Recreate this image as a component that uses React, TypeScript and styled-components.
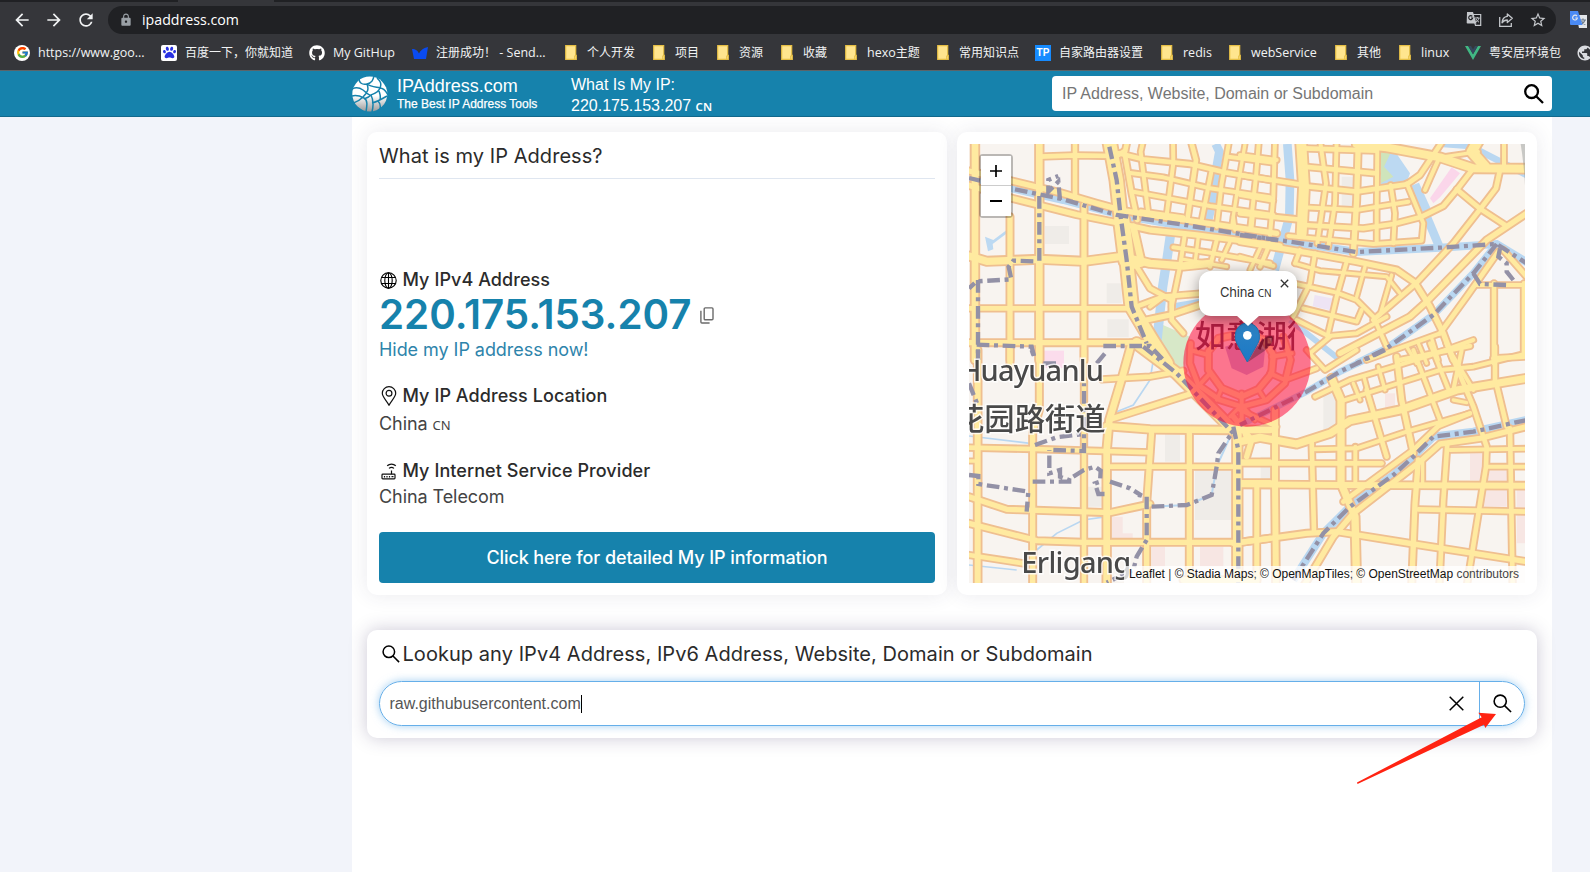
import React from 'react';
import styled, { createGlobalStyle } from 'styled-components';
import { MdArrowBack, MdArrowForward, MdRefresh, MdLock, MdStarBorder, MdPublic } from 'react-icons/md';
import { FcGoogle } from 'react-icons/fc';
import { FaGithub, FaPaw } from 'react-icons/fa';

const ARIAL = '"Liberation Sans", Arial, "Noto Sans CJK SC", sans-serif';
const INTER = 'Inter, "Noto Sans CJK SC", sans-serif';
const SEGOE = '"Open Sans", "Noto Sans CJK SC", sans-serif';

const GlobalStyle = createGlobalStyle`
  * { box-sizing: border-box; }
  html, body { margin: 0; height: 100%; overflow: hidden; }
  body { background: #f2f4fa; font-family: ${INTER}; color: #2b2b2b; }
`;

const Page = styled.div`
  width: 1590px;
  height: 872px;
  display: flex;
  flex-direction: column;
  overflow: hidden;
  position: relative;
`;

/* ---------- browser chrome ---------- */

const TabStrip = styled.div`
  height: 2px;
  flex: none;
  background: #202124;
  padding-left: 178px;
`;
const ActiveTab = styled.div`
  width: 96px;
  height: 2px;
  background: #35363a;
`;
const Toolbar = styled.div`
  height: 36px;
  flex: none;
  background: #35363a;
  display: flex;
  align-items: center;
  padding-left: 12px;
  overflow: hidden;
`;
const NavButtons = styled.div`
  display: flex;
  flex: none;
  gap: 12px;
  color: #f1f3f4;
  width: 96px;
  svg { display: block; flex: none; }
`;
const Omnibox = styled.div`
  width: 1448px;
  flex: none;
  height: 28px;
  border-radius: 14px;
  background: #202124;
  display: flex;
  align-items: center;
  padding: 0 9px 0 11px;
  font-family: ${SEGOE};
  font-size: 14.2px;
  color: #fff;
`;
const LockSlot = styled.div`
  width: 23px;
  color: #9aa0a6;
  svg { display: block; }
`;
const Url = styled.span`
  flex: 1;
  line-height: 20px;
`;
const OmniActions = styled.div`
  display: flex;
  gap: 14.500px;
  color: #c4c7cb;
  svg { display: block; }
`;
const Extension = styled.div`
  margin-left: 14px;
  width: 18px;
  height: 18px;
  flex: none;
  svg { display: block; }
`;
const Bookmarks = styled.div`
  height: 32px;
  flex: none;
  background: #35363a;
  display: flex;
  gap: 16px;
  align-items: center;
  padding: 0 0 3px 14px;
  overflow: hidden;
`;
const Bookmark = styled.div`
  display: flex;
  flex: none;
  gap: 8px;
  align-items: center;
`;
const BookmarkIcon = styled.div`
  width: 16px;
  height: 16px;
  display: flex;
  align-items: center;
  justify-content: center;
  svg { display: block; flex: none; }
`;
const BookmarkLabel = styled.span<{ $w: number }>`
  width: ${(p) => p.$w}px;
  font: 12.5px/20px ${SEGOE};
  color: #f1f3f4;
  white-space: pre;
`;
const Cjk = styled.span`
  font: 12px/20px "Noto Sans CJK SC", sans-serif;
`;
const WhiteDisc = styled.div<{ $radius: string }>`
  width: 16px;
  height: 16px;
  border-radius: ${(p) => p.$radius};
  background: #fff;
  color: #2932e1;
  display: flex;
  align-items: center;
  justify-content: center;
`;
const TpBadge = styled.div`
  width: 16px;
  height: 16px;
  background: #168bff;
  color: #fff;
  font: bold 10px/16px ${ARIAL};
  text-align: center;
`;

const Folder = () => (
  <svg width="12" height="15" viewBox="0 0 12 15">
    <path d="M.7.7h10v9.6h.6v4h-10.600z" fill="#ffe58e" stroke="#e6bf45" strokeWidth="1.200" />
    <path d="M9.700 14v-3.200h1.600" fill="none" stroke="#e6bf45" strokeWidth="1" />
  </svg>
);
const BlueWing = () => (
  <svg width="16" height="12" viewBox="0 0 16 12">
    <path d="M0 2c4 0 5.500 1.500 7 4.500C8.500 3.500 11 1 16 0l-2 12H2z" fill="#0a4bf0" />
  </svg>
);
const VueMark = () => (
  <svg width="16" height="14" viewBox="0 0 16 14">
    <path d="M0 0h3.200L8 8.300 12.800 0H16L8 13.900z" fill="#41b883" />
    <path d="M3.200 0H6l2 3.500L10 0h2.800L8 8.300z" fill="#35495e" />
  </svg>
);
const TranslateMark = () => (
  <svg width="18" height="18" viewBox="0 0 18 18">
    <path d="M6 4h11v13H9z" fill="#e3e6ea" />
    <path d="M10 9h6M13 7.500V9M15 9c-.6 2-2 3.500-4 4.500M11.500 10c.8 1.500 2 2.800 3.800 3.500" stroke="#6d7b8a" strokeWidth="1.200" fill="none" />
    <path d="M0 0h8l4.500 14H1a1 1 0 0 1-1-1z" fill="#4a8af4" />
    <path d="M7 5.200A2.400 2.400 0 1 0 7.400 7H5.300" stroke="#e3e6ea" strokeWidth="1.200" fill="none" />
  </svg>
);
const PageTranslate = () => (
  <svg width="16" height="16" viewBox="0 0 16 16">
    <path d="M6.500 3.500h8.200v10.800H9.500z" fill="none" stroke="#c4c7cb" strokeWidth="1.200" />
    <path d="M9 7h4.600M11.300 6v1M13 7c-.5 2-1.700 3.200-3 4M10 8c.6 1.300 1.600 2.500 3 3.200" stroke="#c4c7cb" fill="none" />
    <path d="M1 1h6l3.500 11.500H1.500a.8.8 0 0 1-.8-.8z" fill="#c4c7cb" />
    <path d="M6.300 5.400A2 2 0 1 0 6.700 7H5" stroke="#202124" strokeWidth="1.100" fill="none" />
  </svg>
);
const ShareIcon = () => (
  <svg width="18" height="18" viewBox="0 0 18 18" fill="none" stroke="#c4c7cb" strokeWidth="1.300">
    <path d="M2.700 6v9.300h11.600V12" />
    <path d="M10.300 3l5 4.300-5 4.200V9c-2.500 0-4 .8-5.300 2.800.3-3.500 2-6 5.300-6.400z" strokeLinejoin="round" />
  </svg>
);

type BookmarkData = { icon: React.ReactNode; label: React.ReactNode; w: number };
const bookmarks: BookmarkData[] = [
  { icon: <WhiteDisc $radius="50%"><FcGoogle size={13} /></WhiteDisc>, label: 'https://www.goo...', w: 107 },
  { icon: <WhiteDisc $radius="2px"><FaPaw size={13} /></WhiteDisc>, label: <Cjk>百度一下，你就知道</Cjk>, w: 108 },
  { icon: <FaGithub size={16} color="#fff" />, label: 'My GitHup', w: 63 },
  { icon: <BlueWing />, label: <><Cjk>注册成功！</Cjk>{' - Send...'}</>, w: 111 },
  { icon: <Folder />, label: <Cjk>个人开发</Cjk>, w: 48 },
  { icon: <Folder />, label: <Cjk>项目</Cjk>, w: 24 },
  { icon: <Folder />, label: <Cjk>资源</Cjk>, w: 24 },
  { icon: <Folder />, label: <Cjk>收藏</Cjk>, w: 24 },
  { icon: <Folder />, label: <>hexo<Cjk>主题</Cjk></>, w: 52 },
  { icon: <Folder />, label: <Cjk>常用知识点</Cjk>, w: 60 },
  { icon: <TpBadge>TP</TpBadge>, label: <Cjk>自家路由器设置</Cjk>, w: 84 },
  { icon: <Folder />, label: 'redis', w: 28 },
  { icon: <Folder />, label: 'webService', w: 66 },
  { icon: <Folder />, label: <Cjk>其他</Cjk>, w: 24 },
  { icon: <Folder />, label: 'linux', w: 28 },
  { icon: <VueMark />, label: <Cjk>粤安居环境包</Cjk>, w: 72 },
  { icon: <MdPublic size={18} color="#dadce0" />, label: '', w: 0 },
];

/* ---------- site header ---------- */

const Header = styled.header`
  height: 47px;
  flex: none;
  background: #1682ac;
  border-top: 1px solid #5b6469;
  border-bottom: 1px solid #12698c;
  padding-left: 352px;
  display: flex;
  align-items: center;
  font-family: ${ARIAL};
  color: #fff;
`;
const Brand = styled.div`
  width: 219px;
  display: flex;
  gap: 9px;
  svg { flex: none; }
`;
const BrandName = styled.div`
  padding-top: 1px;
  font-size: 18px;
  line-height: 19px;
`;
const Tagline = styled.div`
  font-size: 12px;
  line-height: 17px;
  height: 16px;
  white-space: nowrap;
  -webkit-text-stroke: 0.25px #fff;
`;
const MyIp = styled.div`
  width: 481px;
  padding-top: 3px;
  font-size: 16px;
  line-height: 21px;
`;
const Cn = styled.span<{ $size: number; $bold?: boolean }>`
  font-family: "Noto Sans", sans-serif;
  font-size: ${(p) => p.$size}px;
  font-weight: ${(p) => (p.$bold ? 600 : 400)};
`;
const HeaderSearch = styled.div`
  width: 500px;
  height: 35px;
  background: #fff;
  border-radius: 4px;
  display: flex;
  align-items: center;
  justify-content: space-between;
  padding: 0 8px 0 10px;
  font-size: 16px;
  letter-spacing: -0.01px;
  color: #757575;
`;

const GlobeLogo = () => (
  <svg width="36" height="36" viewBox="0 0 36 36">
    <defs>
      <linearGradient id="globe" x1="0" y1="0" x2="0" y2="1">
        <stop offset=".55" stopColor="#fff" />
        <stop offset="1" stopColor="#9a9a9a" />
      </linearGradient>
    </defs>
    <circle cx="17.800" cy="18" r="17.500" fill="url(#globe)" />
    <path
      d="M7 2c0 5 3 7 8 6s6-4 7-8M15 8c2 5 1 8-4 13S4 26 1 27M0 13c4-2 8-1 11 1s6 6 8 5 7-2 9-7 0-7-3-10M28 12c3 0 6 3 8 7M0 20c4-1 8 0 12 2s3 8 2 14M19 19c-3 3-5 3-7 4M19 19c2 4 3 9 1 17M20 27c5-1 10-4 15-7M26 25c2 2 3 4 2 8M28 12c-4-1-9-1-13-4M27 15c1 3 2 5 1 9"
      fill="none" stroke="#1682ac" strokeWidth="1.500"
    />
  </svg>
);
const Magnifier = ({ size, stroke }: { size: number; stroke: number }) => (
  <svg width={size} height={size} viewBox="0 0 20 20" fill="none" stroke="#000" strokeWidth={stroke}>
    <circle cx="7.600" cy="7.600" r="6.400" />
    <path d="M12.200 12.200l6.800 6.800" />
  </svg>
);

/* ---------- content ---------- */

const Content = styled.main`
  margin-left: 352px;
  width: 1200px;
  flex: 1;
  background: #fff;
  padding: 15px;
  display: flex;
  flex-direction: column;
  gap: 35px;
`;
const CardRow = styled.div`
  display: flex;
  gap: 10px;
`;
const Card = styled.section`
  width: 580px;
  height: 463px;
  padding: 12px;
  border-radius: 10px;
  background: #fff;
  box-shadow: 0 0 20px rgba(50, 50, 93, 0.1);
  display: flex;
  flex-direction: column;
`;
const CardTitle = styled.h1`
  margin: 0 0 89px;
  height: 35px;
  border-bottom: 1px solid #dfe6f0;
  font-size: 20px;
  font-weight: 400;
  line-height: 24px;
  letter-spacing: 0.06px;
`;
const Heading = styled.h2<{ $top?: number }>`
  margin: ${(p) => p.$top ?? 0}px 0 0;
  height: 24px;
  display: flex;
  align-items: center;
  gap: 4.500px;
  font-size: 18px;
  font-weight: 500;
  line-height: 24px;
  letter-spacing: 0.07px;
`;
const IconSlot = styled.span`
  width: 19px;
  height: 22px;
  display: flex;
  align-items: center;
  justify-content: center;
`;
const BigIp = styled.div`
  height: 46px;
  display: flex;
  align-items: center;
  gap: 8px;
  font-size: 40.300px;
  font-weight: 600;
  line-height: 46px;
  color: #1682ac;
`;
const HideLink = styled.a`
  height: 24px;
  font-size: 18px;
  line-height: 24px;
  letter-spacing: -0.05px;
  color: #2e84ab;
`;
const Value = styled.div<{ $h: number }>`
  height: ${(p) => p.$h}px;
  line-height: ${(p) => p.$h}px;
  font-size: 18px;
  letter-spacing: -0.07px;
  color: #444;
`;
const DetailButton = styled.button`
  margin: 22px 0 0;
  height: 51px;
  border: 0;
  border-radius: 4px;
  background: #1682ac;
  color: #fff;
  font: 450 18px ${INTER};
  letter-spacing: -0.09px;
`;

const WireGlobe = () => (
  <svg width="17" height="17" viewBox="0 0 17 17" fill="none" stroke="#000" strokeWidth="1.100">
    <circle cx="8.500" cy="8.500" r="7.700" />
    <ellipse cx="8.500" cy="8.500" rx="3.700" ry="7.700" />
    <path d="M8.500.8v15.400M1.800 5.500h13.400M1.800 11.500h13.400" />
  </svg>
);
const PinIcon = () => (
  <svg width="16" height="20" viewBox="0 0 15 20" fill="none" stroke="#111" strokeWidth="1.200">
    <path d="M7.500 19.200C5 14.500.8 11 .8 7.300a6.700 6.700 0 0 1 13.400 0c0 3.700-4.200 7.200-6.700 11.900z" />
    <circle cx="7.500" cy="7.300" r="2.900" />
  </svg>
);
const RouterIcon = () => (
  <svg width="16" height="17" viewBox="0 0 16 17" fill="none" stroke="#111" strokeWidth="1.200">
    <rect x="1" y="11.200" width="13" height="4.600" rx=".8" />
    <path d="M3.500 13v1.500M6 13v1.500M8.500 13v1.500M10.500 13.700h2M10.500 7.500v3.700M8 5.400a3.800 3.800 0 0 1 5 0M6.200 2.800a6.300 6.300 0 0 1 8.600 0" />
  </svg>
);
const CopyIcon = () => (
  <svg width="14" height="17" viewBox="0 0 14 17" fill="none" stroke="#6b6b6b" strokeWidth="1.400">
    <rect x="4.200" y=".9" width="8.800" height="11.800" rx="1" />
    <path d="M.9 3.800v11.200q0 1 1 1h7.700" />
  </svg>
);

/* ---------- map ---------- */

const MapFrame = styled.div`
  width: 556px;
  height: 439px;
  position: relative;
  overflow: hidden;
`;
const Tiles = styled.svg`
  display: block;
`;
const ZoomControl = styled.div`
  position: absolute;
  left: 10px;
  top: 10px;
  width: 34px;
  border: 2px solid rgba(0, 0, 0, 0.25);
  background-clip: padding-box;
  border-radius: 4px;
`;
const ZoomButton = styled.div<{ $last?: boolean }>`
  height: 30px;
  background: #fff;
  border-bottom: ${(p) => (p.$last ? 0 : '1px solid #ccc')};
  display: flex;
  align-items: center;
  justify-content: center;
`;
const Popup = styled.div`
  position: absolute;
  left: 230px;
  top: 127px;
  width: 98px;
  height: 45px;
  border-radius: 12px;
  background: #fff;
  box-shadow: 0 3px 14px rgba(0, 0, 0, 0.4);
  font-size: 13px;
  line-height: 43px;
  letter-spacing: -0.2px;
  padding-left: 21px;
  color: #333;
`;
const PopupClose = styled.svg`
  position: absolute;
  right: 8px;
  top: 8px;
`;
const PopupTip = styled.svg`
  position: absolute;
  left: 267px;
  top: 171px;
`;
const Attribution = styled.div`
  position: absolute;
  right: 0;
  bottom: 0;
  height: 17px;
  padding: 0 6px 0 5px;
  background: rgba(255, 255, 255, 0.78);
  font: 12px/16px ${ARIAL};
  letter-spacing: -0.01px;
  color: #444;
  white-space: nowrap;
`;
const Source = styled.a`
  color: #111;
`;

type Road = [width: number, d: string];
type District = { x: number; y: number; roads: Road[]; rivers: Road[]; rails: string[] };

const districts: District[] = [
  {
    x: 0, y: 0,
    rivers: [
      [24, 'M57 176L200 208L340 240L520 287L700 318L980 358'],
      [26, 'M797 72L808 95L800 140L786 250L768 330'],
      [28, 'M662 340L652 410L638 500L618 690'],
      [16, 'M670 558L780 540'],
    ],
    roads: [
      [24, 'M75 72V720'], [20, 'M180 290V720'], [24, 'M268 60V400L268 450V720'], [18, 'M375 60V235'], [20, 'M402 255V720'],
      [18, 'M268 110L375 106L500 108L525 92'],
      [20, 'M57 153L190 184L330 218L440 250L520 272L620 288L760 308L980 340'],
      [20, 'M57 196L190 236L380 284L500 308L600 330L740 345L960 373L990 378'],
      [42, 'M478 60L500 180L512 290L530 420L545 560L605 660L650 730'],
      [26, 'M57 408L110 424L268 418L402 424L510 410'],
      [50, 'M515 300L530 420'], [24, 'M550 320L575 430L540 440'], [26, 'M540 415L600 430L700 438L780 430'],
      [18, 'M57 565H545L640 530L760 520'], [20, 'M570 604L660 585L780 545'], [20, 'M57 668H600'],
      [18, 'M560 440L600 505L665 540L665 600L700 640'], [16, 'M600 560L640 530'],
      [18, 'M530 72L524 100L545 220L562 300'], [16, 'M580 60L572 95L595 280'], [16, 'M669 60L670 130L650 285'],
      [18, 'M722 60L738 120L712 300'], [16, 'M785 150L755 300'],
      [18, 'M505 100L580 118L720 132L830 158L960 180'], [16, 'M535 158L640 172L780 205L960 232'],
      [16, 'M550 215L640 232L780 258L970 285'], [16, 'M572 274L700 292'],
      [16, 'M838 60L815 190L800 320'], [14, 'M885 72L870 160L845 320'], [16, 'M835 110L970 128'],
      [14, 'M910 280L905 330'], [14, 'M850 290L855 330'],
      [16, 'M705 340L690 440L665 560'], [14, 'M745 350L735 430'], [16, 'M800 360L780 440'],
      [16, 'M670 382L780 398L960 430'], [14, 'M840 365L815 420'], [14, 'M930 385L900 450'], [14, 'M700 418L830 440'],
    ],
    rails: [
      'M57 174L90 182M195 208L340 238L500 285L700 314L980 360', 'M478 80L500 180L512 290L530 420L545 560L590 670',
      'M268 228V430', 'M250 424L190 422L176 440L184 478L80 484L57 505', 'M84 480V720', 'M80 674L245 680L255 720',
      'M460 678H600L640 720', 'M330 240L325 185L295 215L295 180L325 168',
    ],
  },
  {
    x: 870, y: 0,
    rivers: [
      [24, 'M0 345L150 365L350 396L600 383L770 372L865 430'],
      [26, 'M142 72L150 180L148 290L104 450'], [18, 'M150 600L300 720'],
      [26, 'M560 290L600 385'], [22, 'M770 372L700 460L580 585L440 685L350 730'],
      [20, 'M610 72L690 78L860 165'],
    ],
    roads: [
      [16, 'M57 60L48 170L30 330'], [16, 'M105 60L100 230L90 345'],
      [16, 'M0 105L110 120'], [18, 'M0 165L190 195'], [16, 'M0 225L100 242'], [18, 'M0 280L190 300'],
      [34, 'M183 60L192 200L185 340'], [16, 'M240 60L258 190L232 370'], [16, 'M290 60L285 250L265 380'],
      [20, 'M355 60L350 240L340 400'], [16, 'M412 72L410 270L410 370'], [16, 'M452 195L465 280L460 370'], [16, 'M500 190L550 310L545 362L400 372L145 348'],
      [18, 'M190 85L410 92'], [18, 'M190 140L410 160'], [18, 'M190 198L350 215L500 193L540 165L610 60'],
      [16, 'M190 262L350 270L505 245'], [18, 'M190 315L370 325L460 312L545 290L610 258L650 210L700 145'],
      [28, 'M350 72L440 82L600 112L700 145L860 146'], [16, 'M600 108L570 175L555 210'],
      [34, 'M715 60L695 95L735 140'], [16, 'M792 60V140'], [14, 'M600 112L715 95'],
      [18, 'M650 208L720 266L795 315'], [18, 'M780 150L768 205L720 268L640 370L530 488L400 600'],
      [20, 'M860 280L740 360L560 545L510 590L300 700'],
      [20, 'M0 365L200 398L350 425L470 450L525 488L570 560L610 640L640 720'],
      [18, 'M775 395L680 530L600 640'], [16, 'M705 495L860 495'], [18, 'M762 490V730'], [18, 'M852 490V710L760 715'], [18, 'M790 390L860 470'],
      [16, 'M0 410L100 438'], [16, 'M90 370L60 440'], [14, 'M165 430L240 452L440 470L480 520'], [16, 'M160 490L290 518L350 540L400 590L440 680'],
      [16, 'M190 565L350 605L365 570'], [16, 'M225 400L210 490L160 590'], [16, 'M320 425L290 530L262 650'], [14, 'M375 440L350 530'],
      [14, 'M455 465L420 585'], [16, 'M170 600L265 648L350 640L440 590'], [16, 'M180 390L165 430'],
      [16, 'M380 720L600 640'], [18, 'M480 720L690 678'], [14, 'M500 680L530 730'], [14, 'M535 670L560 730'], [14, 'M575 655L595 720'],
      [16, 'M210 700L270 650'],
    ],
    rails: ['M0 345L150 365L350 396L600 383L770 372L860 430', 'M770 372L700 460L580 585L440 685L350 730', 'M700 460L720 492L800 495M780 385L775 410L800 430L800 455L820 480'],
  },
  {
    x: 0, y: 690,
    rivers: [[5, 'M57 258L240 280'], [5, 'M615 0L600 90L550 165L500 185'], [5, 'M260 600L320 550L400 510L470 500'], [5, 'M57 645L200 660'], [6, 'M600 470L710 465L785 435L800 350L845 250']],
    roads: [
      [22, 'M83 0V710'], [20, 'M268 0V180L248 250V710'], [20, 'M180 -10V50'], [18, 'M402 0V710'], [24, 'M545 -20L520 70L478 210L470 300V710'],
      [18, 'M455 88L600 80L700 62'], [20, 'M480 208L720 132'], [24, 'M470 228L600 238L840 240L960 240'],
      [18, 'M57 293L250 297L600 307'], [14, 'M57 333H85'], [18, 'M480 350H850'], [20, 'M605 245L590 460V710'], [20, 'M718 250V710'],
      [30, 'M862 230V710'], [20, 'M57 440L170 478L480 488L600 462'], [20, 'M57 520L260 572L400 577H870L960 565'], [18, 'M57 615L220 640'],
      [18, 'M870 335H960'], [24, 'M870 400H960'], [18, 'M921 400V710'], [36, 'M560 -20L680 70L850 240'],
      [20, 'M850 200L905 270L890 320'], [22, 'M700 690H920'],
    ],
    rails: [
      'M57 375L85 378V402L235 425L230 485', 'M248 395H370L330 380V360L298 370V300', 'M310 300L402 303V100', 'M255 285L320 262L400 252',
      'M370 380L402 360L435 350L452 362L450 395L435 400L445 432H475', 'M480 395L540 415L575 437L552 432', 'M590 440V570L560 620L550 660L470 698',
      'M605 470L710 465L785 435L800 350L805 310L845 250', 'M850 230L865 300V700', 'M580 -10L680 70L850 250', 'M57 100L85 170', 'M84 0V30', 'M245 0L250 15M280 40H330M440 40L465 10',
    ],
  },
  {
    x: 870, y: 690,
    rivers: [[20, 'M435 0L300 65L200 125L0 225'], [24, 'M860 210L700 245L580 260L520 320L460 375L330 470L250 550L160 690']],
    roads: [
      [26, 'M0 275L60 262L170 282L270 250L330 212L480 180L650 120L860 85'],
      [18, 'M0 340H425'], [22, 'M0 403L300 405L860 407'], [20, 'M-20 580L200 550L290 545L540 585L860 635'],
      [18, 'M50 405V710'], [22, 'M105 180V400L108 710'], [18, 'M215 275L222 545'], [26, 'M275 85L303 150V320V400L345 500L350 710'], [16, 'M346 290V400'],
      [16, 'M220 298L350 295L500 245L690 190'], [18, 'M310 455L520 300L595 228L690 190'], [20, 'M190 710L280 560L340 490L540 335L600 282L720 265L860 230'],
      [18, 'M380 120L410 220L440 320'], [20, 'M470 20L485 150L520 310'], [16, 'M520 0L600 210'], [16, 'M570 -20L630 130'], [18, 'M620 -20L700 170L740 290L738 350L680 710'],
      [16, 'M665 0L640 120'], [18, 'M770 105L800 230'], [18, 'M765 -10V100'], [16, 'M225 140L330 90L560 20L700 -30'], [16, 'M300 155L480 98L600 60L700 50L860 10'],
      [14, 'M340 100L360 150'], [14, 'M372 82L385 130'], [14, 'M415 50L435 120'], [16, 'M640 20L700 120'],
      [16, 'M200 0L255 60L350 0'], [20, 'M535 330L525 460L515 710'], [14, 'M548 330V400'], [18, 'M622 280L610 450L598 710'],
      [18, 'M810 235L818 710'], [16, 'M740 350H860'], [18, 'M535 478L860 485'], [16, 'M630 300L860 296'], [14, 'M640 150L680 158'],
      [16, 'M0 180L110 230L100 270'], [16, 'M0 210L20 270'],
    ],
    rails: ['M435 0L300 65L200 125L0 225', 'M860 210L700 245L580 260L520 320L460 375L330 470L250 550L160 690'],
  },
  {
    x: 660, y: 420,
    rivers: [],
    roads: [
      [20, 'M115 275V330L155 385L215 410L265 388L305 340L310 285L285 240L215 220L145 235z'],
      [18, 'M62 250L60 310L85 375L150 420L215 440L290 420L345 370L362 300L340 230'],
      [16, 'M88 375L120 340M215 400V500M300 340L345 360L440 325M345 360L360 300M305 290L365 280M60 270L115 285'],
      [14, 'M180 470L215 435L255 480M285 420L265 388M140 420L155 385'],
    ],
    rails: [],
  },
];

const CityMap = () => (
  <Tiles width="556" height="439" viewBox="57 72 1668 1317">
    <defs>
      <filter id="soft" x="0" y="0" width="1" height="1"><feGaussianBlur stdDeviation="2" /></filter>
      <linearGradient id="pin" x1="0" y1="0" x2="0" y2="1">
        <stop offset="0" stopColor="#2e83c3" />
        <stop offset="1" stopColor="#1b79c6" />
      </linearGradient>
    </defs>
    <g filter="url(#soft)">
      <rect x="40" y="50" width="1720" height="1360" fill="#f8f4f0" />
      <g fill="#efece8">
        <path d="M285 318h72v54h-72zM470 490h45v60h-45zM472 598h64v54h-64zM645 940h45v85h-45zM735 1030h110v170h-110zM410 1100h60v60h-60zM1175 170h40v95h-40zM1120 820h42v110l-42 20zM932 1010h32v90h-32z" />
      </g>
      <g fill="#f7e6e3">
        <path d="M482 1190h36v50h30v30h-66zM605 1280h40v60h-40zM750 1280h70v60h-70zM1305 820h30v50h-30zM1560 1000h40v80h-40zM1600 1050h70v110h-70zM1700 1110h30v160h-30z" />
      </g>
      <path d="M282 692h60v52h-60z" fill="#fbdcec" />
      <path d="M632 612L720 650L700 760L640 700L618 672z" fill="#d7e8c8" />
      <path d="M1292 90h40l48 70-10 28-78 5z" fill="#bcd9f2" />
      <path d="M1292 90h34l-24 50 28 30-38 20z" fill="#cfe4bb" />
      <path d="M1375 200l32-12 36 80-24 12z" fill="#bcd9f2" />
      <path d="M1094 525l62 12-6 36-62-14z" fill="#eee4f4" />
      <path d="M105 350l25 10 40-30 6 6-48 36 2 16-16 6z" fill="#bcd9f2" />
      <path d="M825 680l60-20 60 30-5 50-50 25-45-20z" fill="#c3b2dc" />
      {districts.map((k) => (
        <g key={`w${k.x}${k.y}`} transform={`translate(${k.x} ${k.y})`} fill="none" stroke="#b9d7f1">
          {k.rivers.map(([w, d]) => <path key={d} d={d} strokeWidth={w} />)}
        </g>
      ))}
      {districts.map((k) => (
        <g key={`c${k.x}${k.y}`} transform={`translate(${k.x} ${k.y})`} fill="none" stroke="#efbf90" strokeLinejoin="round" strokeLinecap="round">
          {k.roads.map(([w, d]) => <path key={d} d={d} strokeWidth={w + 7} />)}
        </g>
      ))}
      {districts.map((k) => (
        <g key={`f${k.x}${k.y}`} transform={`translate(${k.x} ${k.y})`} fill="none" stroke="#ffeaa0" strokeLinejoin="round" strokeLinecap="round">
          {k.roads.map(([w, d]) => <path key={d} d={d} strokeWidth={w - 4} />)}
        </g>
      ))}
      <path d="M1440 235L1505 142L1530 160L1470 232L1450 250z" fill="#fbd6ea" />
      {districts.map((k) => (
        <g key={`r${k.x}${k.y}`} transform={`translate(${k.x} ${k.y})`} fill="none" stroke="#9391a6" strokeWidth="13" strokeDasharray="38 14 12 14">
          {k.rails.map((d) => <path key={d} d={d} />)}
        </g>
      ))}
      <path d="M1712 72h14v140q-4-80-14-140z" fill="#8d9290" opacity=".45" />
      <g fill="#4a4a4a" stroke="#fff" strokeOpacity=".8" strokeWidth="9" paintOrder="stroke" fontWeight="500" fontFamily='"Noto Sans", sans-serif'>
        <text x="29" y="782" fontSize="87" textLength="433">Huayuanlu</text>
        <text x="12" y="931" fontSize="91" fontFamily='"Noto Sans CJK SC", sans-serif'>花园路街道</text>
        <text x="214" y="1358" fontSize="87" textLength="330">Erligang</text>
      </g>
      <g clipPath="url(#tile)">
        <text x="735" y="680" fontSize="92" fontWeight="500" fill="#5b3d50" fontFamily='"Noto Sans CJK SC", sans-serif'>如意湖街</text>
      </g>
    </g>
    <clipPath id="tile"><path d="M699 560H1035V760H699z" /></clipPath>
    <circle cx="891" cy="729" r="191" fill="#ff0033" fillOpacity=".52" />
    <path d="M894 726L925 672Q955 640 968 650Q975 668 940 695z" fill="#000" opacity=".28" />
    <path d="M892 726L861 671A36 36 0 0 1 856 645a36 36 0 0 1 72 0A36 36 0 0 1 923 671z" fill="url(#pin)" stroke="#2471ad" strokeWidth="3" />
    <circle cx="892" cy="646" r="13" fill="#fff" />
  </Tiles>
);

/* ---------- lookup ---------- */

const LookupCard = styled.section`
  height: 108px;
  border-radius: 10px;
  background: #fff;
  box-shadow: 0 0 18px rgba(50, 40, 93, 0.25);
  padding: 12px;
`;
const LookupTitle = styled.h2`
  margin: 0 0 15px;
  height: 24px;
  display: flex;
  align-items: center;
  gap: 2.500px;
  padding-left: 3px;
  font-size: 20px;
  font-weight: 400;
  line-height: 24px;
  letter-spacing: 0.05px;
`;
const LookupField = styled.div`
  height: 45px;
  border: 1px solid #66afe9;
  border-radius: 22.5px;
  box-shadow: 0 0 8px rgba(102, 175, 233, 0.6);
  display: flex;
  align-items: center;
  padding-left: 9.500px;
  font: 16px ${ARIAL};
  color: #555;
`;
const Typed = styled.span`
  line-height: 18px;
  border-right: 1px solid #000;
`;
const ClearIcon = styled.svg`
  margin-left: auto;
  margin-right: 15px;
`;
const Submit = styled.div`
  width: 45px;
  height: 43px;
  border-left: 1px solid #66afe9;
  display: flex;
  align-items: center;
  justify-content: center;
`;
const Pointer = styled.svg`
  position: absolute;
  left: 1350px;
  top: 705px;
`;

export default function App() {
  return (
    <Page>
      <GlobalStyle />
      <TabStrip><ActiveTab /></TabStrip>
      <Toolbar>
        <NavButtons>
          <MdArrowBack size={20} />
          <MdArrowForward size={20} />
          <MdRefresh size={20} />
        </NavButtons>
        <Omnibox>
          <LockSlot><MdLock size={14} /></LockSlot>
          <Url>ipaddress.com</Url>
          <OmniActions>
            <PageTranslate />
            <ShareIcon />
            <MdStarBorder size={18} />
          </OmniActions>
        </Omnibox>
        <Extension><TranslateMark /></Extension>
      </Toolbar>
      <Bookmarks>
        {bookmarks.map((b, i) => (
          <Bookmark key={i}>
            <BookmarkIcon>{b.icon}</BookmarkIcon>
            <BookmarkLabel $w={b.w}>{b.label}</BookmarkLabel>
          </Bookmark>
        ))}
      </Bookmarks>
      <Header>
        <Brand>
          <GlobeLogo />
          <div>
            <BrandName>IPAddress.com</BrandName>
            <Tagline>The Best IP Address Tools</Tagline>
          </div>
        </Brand>
        <MyIp>
          What Is My IP:<br />
          220.175.153.207 <Cn $size={11.5} $bold>CN</Cn>
        </MyIp>
        <HeaderSearch>
          IP Address, Website, Domain or Subdomain
          <Magnifier size={20} stroke={2.3} />
        </HeaderSearch>
      </Header>
      <Content>
        <CardRow>
          <Card>
            <CardTitle>What is my IP Address?</CardTitle>
            <Heading><IconSlot><WireGlobe /></IconSlot>My IPv4 Address</Heading>
            <BigIp>220.175.153.207<CopyIcon /></BigIp>
            <HideLink>Hide my IP address now!</HideLink>
            <Heading $top={22}><IconSlot><PinIcon /></IconSlot>My IP Address Location</Heading>
            <Value $h={32}>China <Cn $size={13}>CN</Cn></Value>
            <Heading $top={19}><IconSlot><RouterIcon /></IconSlot>My Internet Service Provider</Heading>
            <Value $h={27}>China Telecom</Value>
            <DetailButton>Click here for detailed My IP information</DetailButton>
          </Card>
          <Card>
            <MapFrame>
              <CityMap />
              <ZoomControl>
                <ZoomButton>
                  <svg width="12" height="12" stroke="#000" strokeWidth="1.700"><path d="M0 6h12M6 0v12" /></svg>
                </ZoomButton>
                <ZoomButton $last>
                  <svg width="12" height="12" stroke="#000" strokeWidth="2"><path d="M0 6h12" /></svg>
                </ZoomButton>
              </ZoomControl>
              <Popup>
                China <Cn $size={10}>CN</Cn>
                <PopupClose width="9" height="9" stroke="#333" strokeWidth="1.300"><path d="M.8.8l7.400 7.400M8.200.8L.8 8.200" /></PopupClose>
              </Popup>
              <PopupTip width="24" height="11"><path d="M0 0h24L12 11z" fill="#fff" /></PopupTip>
              <Attribution>
                <Source>Leaflet</Source> | <Source>© Stadia Maps</Source>; <Source>© OpenMapTiles</Source>; <Source>© OpenStreetMap</Source> contributors
              </Attribution>
            </MapFrame>
          </Card>
        </CardRow>
        <LookupCard>
          <LookupTitle>
            <Magnifier size={18} stroke={1.7} />
            Lookup any IPv4 Address, IPv6 Address, Website, Domain or Subdomain
          </LookupTitle>
          <LookupField>
            <Typed>raw.githubusercontent.com</Typed>
            <ClearIcon width="15" height="15" stroke="#000" strokeWidth="1.500"><path d="M.7.700l13.600 13.600M14.300.7L.7 14.300" /></ClearIcon>
            <Submit><Magnifier size={19} stroke={1.7} /></Submit>
          </LookupField>
        </LookupCard>
      </Content>
      <Pointer width="155" height="85">
        <path d="M7 77.500L131.700 12.300 128.300 7.700 146 9 135.300 23 134 19.700 7.500 79z" fill="#ff2312" />
      </Pointer>
    </Page>
  );
}
